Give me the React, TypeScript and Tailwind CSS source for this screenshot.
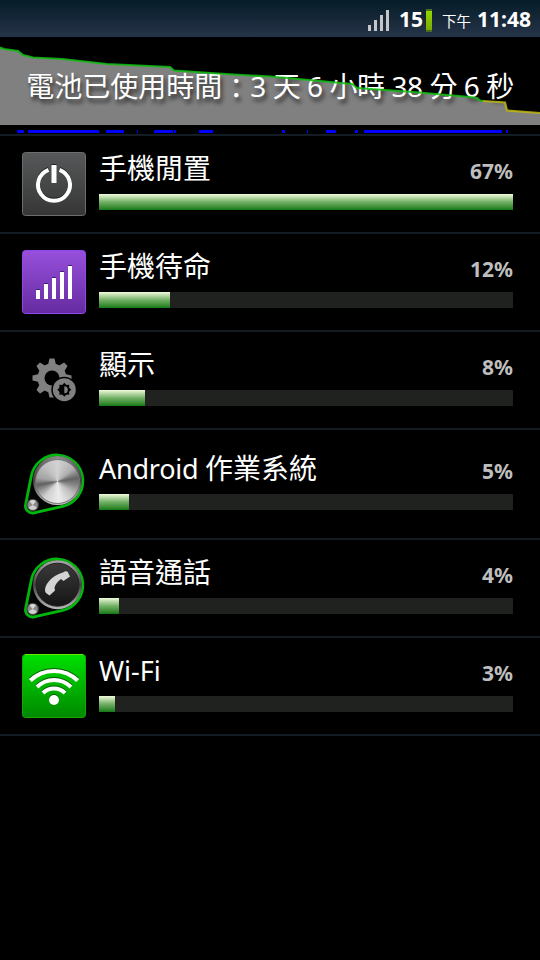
import React from 'react';

interface UsageItem {
  name: React.ReactNode;
  percent: number;
  barWidth: number;
  icon: React.ReactNode;
  rowClass?: string;
}

const PowerIcon = () => (
  <svg width="64" height="64" viewBox="0 0 64 64">
    <defs>
      <linearGradient id="powerBg" x1="0" y1="0" x2="0" y2="1">
        <stop offset="0" stopColor="#565859" />
        <stop offset="1" stopColor="#363636" />
      </linearGradient>
    </defs>
    <rect x="0.5" y="0.5" width="63" height="63" rx="3" fill="url(#powerBg)" stroke="#6c6e6e" />
    <path d="M26.5 17.8A16 16 0 1 0 37.5 17.8" fill="none" stroke="#222" strokeWidth="4" transform="translate(0 -1)" />
    <path d="M26.5 17.8A16 16 0 1 0 37.5 17.8" fill="none" stroke="#fff" strokeWidth="4" />
    <rect x="29.5" y="12" width="5" height="2" fill="#222" />
    <rect x="29.5" y="13" width="5" height="18" fill="#fff" />
  </svg>
);

const CellIcon = () => (
  <svg width="64" height="64" viewBox="0 0 64 64">
    <defs>
      <linearGradient id="cellBg" x1="0" y1="0" x2="0" y2="1">
        <stop offset="0" stopColor="#9750dc" />
        <stop offset="1" stopColor="#652ba0" />
      </linearGradient>
    </defs>
    <rect x="0.5" y="0.5" width="63" height="63" rx="3" fill="url(#cellBg)" stroke="#9145ee" />
    <path d="M14 39h4v10h-4zM22 33h4v16h-4zM30 27h4v22h-4zM38 21h4v28h-4zM46 15h4v34h-4z" fill="#42206b" />
    <path d="M14 40h4v9h-4zM22 34h4v15h-4zM30 28h4v21h-4zM38 22h4v27h-4zM46 16h4v33h-4z" fill="#fff" />
  </svg>
);

const DisplayIcon = () => (
  <svg width="64" height="64" viewBox="0 0 64 64">
    {/* gear */}
    <g fill="#808080">
      {[0, 45, 90, 135, 180, 225, 270, 315].map((deg) => (
        <path key={deg} d="M26 17L27.500 10.500H32.500L34 17Z" transform={`rotate(${deg} 30 30)`} />
      ))}
      <circle cx="30" cy="30" r="14.5" />
    </g>
    <circle cx="30" cy="30" r="7.5" fill="#000" />
    {/* brightness badge */}
    <circle cx="42.3" cy="41.7" r="13" fill="#000" />
    <circle cx="42.3" cy="41.7" r="11.5" fill="#808080" />
    <g fill="#000">
      {[0, 45, 90, 135, 180, 225, 270, 315].map((deg) => (
        <path key={deg} d="M39.8 37.5L42.3 34.7L44.8 37.5Z" transform={`rotate(${deg} 42.3 41.7)`} />
      ))}
      <circle cx="42.3" cy="41.7" r="5" />
    </g>
    <path d="M42.3 38.2A3.5 3.5 0 0 1 42.3 45.2Z" fill="#808080" />
  </svg>
);

const Teardrop = () => (
  <path
    d="M9.3 24A26 26 0 1 1 40.6 54.350L12.050 60.800A7 7 0 0 1 3.600 52.600Z"
    fill="#050505"
    stroke="#00b80c"
    strokeWidth="2.8"
    strokeLinejoin="round"
  />
);

const SmallKnob = () => (
  <>
    <circle cx="10.7" cy="53" r="6.2" fill="#4a4a4a" />
    <circle cx="10.7" cy="53" r="5" fill="#8c8c8c" />
    <path d="M6.500 55.500A5 5 0 0 0 15 55.500L10.700 53Z" fill="#d0d0d0" />
    <path d="M7.500 49.300A5 5 0 0 1 14 49.300L10.700 53Z" fill="#d8d8d8" />
  </>
);

const SystemIcon = () => (
  <div className="relative h-16 w-16">
    <svg width="64" height="64" viewBox="0 0 64 64">
      <Teardrop />
      <SmallKnob />
    </svg>
    <div className="absolute left-[11px] top-[4px] h-[49px] w-[49px] rounded-full bg-[conic-gradient(#8a8a8a,#444_90deg,#999_130deg,#c8c8c8_180deg,#999_230deg,#444_270deg,#8a8a8a)]" />
    <div className="absolute left-[13px] top-[7px] h-[45px] w-[45px] rounded-full border border-[#777] bg-[conic-gradient(#d2d2d2,#b0b0b0_50deg,#636363_80deg,#858585_100deg,#c0c0c0_130deg,#ececec_175deg,#cfcfcf_220deg,#8c8c8c_245deg,#606060_260deg,#a2a2a2_280deg,#bfbfbf_320deg,#d2d2d2)]" />
  </div>
);

const CallIcon = () => (
  <svg width="64" height="64" viewBox="0 0 64 64">
    <defs>
      <linearGradient id="callRing" x1="0" y1="0" x2="0" y2="1">
        <stop offset="0" stopColor="#aaa" />
        <stop offset="0.5" stopColor="#444" />
        <stop offset="1" stopColor="#bbb" />
      </linearGradient>
      <linearGradient id="callBg" x1="0" y1="0" x2="0" y2="1">
        <stop offset="0" stopColor="#3a3a3a" />
        <stop offset="1" stopColor="#151515" />
      </linearGradient>
    </defs>
    <Teardrop />
    <circle cx="35.5" cy="28.700" r="24.5" fill="url(#callRing)" />
    <circle cx="35.5" cy="28.700" r="21.5" fill="url(#callBg)" stroke="#222" />
    <path
      d="M41 16.500C43 15 45 15 45.800 16L48 20.500L41.500 25L39 23C36 25 33.500 28 32.500 31.500L33 34.500L27.500 39.500L24 37C22.500 35 23 33 23.500 31C26 24.500 33 18.500 41 16.500Z"
      fill="#d4d4d4"
    />
    <SmallKnob />
  </svg>
);

const WifiIcon = () => (
  <svg width="64" height="64" viewBox="0 0 64 64">
    <defs>
      <linearGradient id="wifiBg" x1="0" y1="0" x2="0" y2="1">
        <stop offset="0" stopColor="#00e000" />
        <stop offset="1" stopColor="#008800" />
      </linearGradient>
      <g id="wifiArcs" fill="none" strokeWidth="4">
        <path d="M8.300 26.500A34 34 0 0 1 55.700 26.500" />
        <path d="M15 33A24 24 0 0 1 49 33" />
        <path d="M21 39A16 16 0 0 1 43 39" />
      </g>
    </defs>
    <rect x="0.5" y="0.5" width="63" height="63" rx="3" fill="url(#wifiBg)" stroke="#18a800" />
    <path d="M3 0.500H61" stroke="#6be800" />
    <use href="#wifiArcs" stroke="#065c06" transform="translate(0 -1)" />
    <use href="#wifiArcs" stroke="#fff" />
    <circle cx="32" cy="45" r="5" fill="#065c06" />
    <circle cx="32" cy="46" r="5" fill="#fff" />
  </svg>
);

const items: UsageItem[] = [
  { name: '手機閒置', percent: 67, barWidth: 414, icon: <PowerIcon /> },
  { name: '手機待命', percent: 12, barWidth: 71, icon: <CellIcon /> },
  { name: '顯示', percent: 8, barWidth: 46, icon: <DisplayIcon /> },
  {
    name: <><span className="text-[27px] tracking-[-0.25px]">Android </span>作業系統</>,
    percent: 5,
    barWidth: 30,
    icon: <SystemIcon />,
    rowClass: 'h-[110px]',
  },
  { name: '語音通話', percent: 4, barWidth: 20, icon: <CallIcon /> },
  { name: <span className="text-[27px]">Wi-Fi</span>, percent: 3, barWidth: 16, icon: <WifiIcon /> },
];

// [start, width] of each awake period
const awake = [
  [17, 7], [28, 71], [106, 18], [137, 1], [154, 19], [174, 2], [199, 14],
  [282, 3], [307, 1], [326, 10], [355, 3], [364, 138], [506, 2],
];

const StatusBar = () => (
  <div className="flex h-[37px] items-center justify-end bg-linear-to-b from-[#051c28] to-[#263449] pr-[9px] text-white">
    <svg width="22" height="22" viewBox="0 0 22 22" className="mt-[5px]" fill="#c6c6c6">
      <path d="M0 15h3v6H0zM6 10h3v11H6zM12 5h3v16h-3zM18 0h3v21h-3z" />
    </svg>
    <span className="mt-[2px] ml-[9px] text-[21px] leading-none font-bold">15</span>
    <div className="mt-[4px] ml-[3px] h-[23px] w-[6px] border-y-2 border-[#4b6d20] bg-linear-to-b from-[#93d800] to-[#7ba800]" />
    <span className="mt-[5px] ml-[10px] text-[14.5px] leading-none">下午</span>
    <span className="mt-[2px] ml-[6px] text-[21px] leading-none font-bold">11:48</span>
  </div>
);

const BatteryHistory = () => (
  <div className="relative h-[99px] border-b-2 border-[#131c22]">
    <svg width="540" height="97" viewBox="0 0 540 97" className="block">
      <path
        d="M0 10.500L4 12L18 14L23 18L33 20.500L62 22L107 27L170 30L174 33.500L233 37.500L270 39.500L287 41L352 47L357 51L413 55L470 60L477 61L480 63.500L505 65.500L507 73.500L540 76V88H0Z"
        fill="#808080"
      />
      {awake.map(([x, w]) => (
        <rect key={x} x={x} y="93" width={w} height="3" fill="#0000ff" />
      ))}
    </svg>
    <div className="absolute inset-x-0 top-[29px] text-center text-[28px] leading-[40px] whitespace-nowrap text-white [text-shadow:2px_4px_4px_#000000b0]">
      電池已使用時間<span className="relative top-[2px]">：</span>
      <span className="tracking-[-0.45px]">3 天 6 小時 38 分 6 秒</span>
    </div>
    {/* level line runs over the label */}
    <svg width="540" height="97" viewBox="0 0 540 97" className="absolute top-0 left-0" fill="none" strokeWidth="2.2">
      <path
        d="M0 10.500L4 12L18 14L23 18L33 20.500L62 22L107 27L170 30L174 33.500L233 37.500L270 39.500L287 41L352 47L357 51L413 55L470 60L477 61L480 63.500L483 64"
        stroke="#10c010"
        strokeOpacity="0.85"
      />
      <path d="M483 64L505 65.500L507 73.500L540 76" stroke="#c0b810" strokeOpacity="0.85" />
    </svg>
  </div>
);

const UsageRow = ({ item }: { item: UsageItem }) => (
  <div className={`flex items-center border-b-2 border-[#131c22] pr-[27px] pl-[22px] ${item.rowClass ?? 'h-[98px]'}`}>
    {item.icon}
    <div className="ml-[13px] flex-1">
      <div className="flex h-[42px] items-start justify-between">
        <span className="-mt-[4px] text-[28px] leading-[40px] text-white">{item.name}</span>
        <span className="mt-[5px] text-[21px] leading-[28px] font-bold text-[#bebebe]">{item.percent}%</span>
      </div>
      <div className="mb-[6px] h-4 bg-[#202220]">
        <div
          className="h-full bg-linear-to-b from-[#f0fbdc] via-[#72b066] to-[#0c7a10]"
          style={{ width: item.barWidth }}
        />
      </div>
    </div>
  </div>
);

export default function App() {
  return (
    <div className="h-[960px] w-[540px] overflow-hidden bg-black font-['Noto_Sans','Noto_Sans_CJK_TC',sans-serif]">
      <StatusBar />
      <BatteryHistory />
      {items.map((item) => (
        <UsageRow key={item.percent} item={item} />
      ))}
    </div>
  );
}
